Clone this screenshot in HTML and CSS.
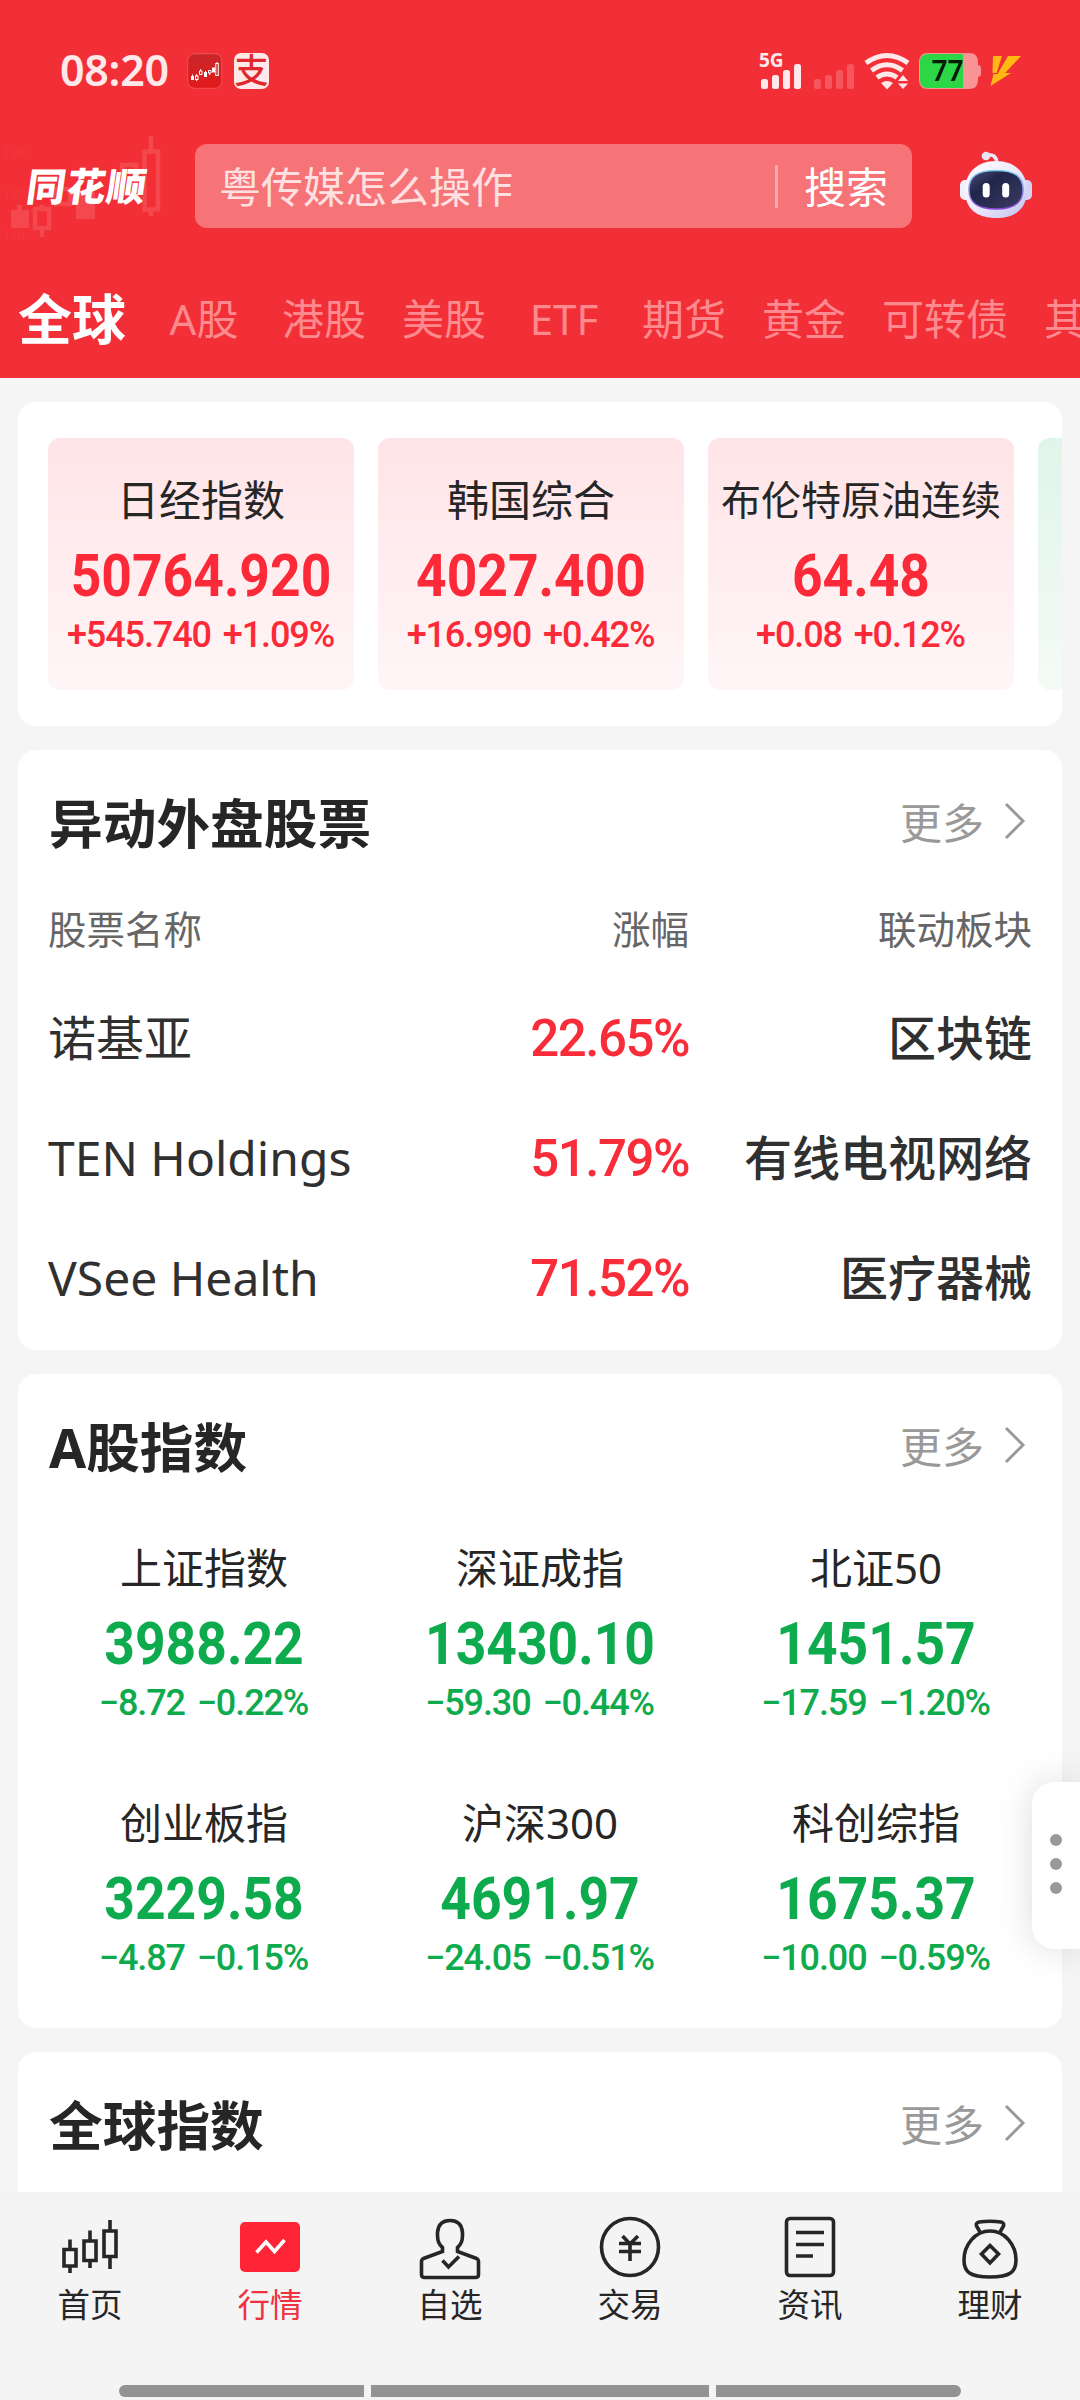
FILE: index.html
```html
<!DOCTYPE html>
<html lang="zh-CN">
<head>
  <meta charset="UTF-8" />
  <meta name="viewport" content="width=device-width, initial-scale=1.0"/>
  <title>同花顺 行情</title>
  <link rel="stylesheet" href="styles.css">
</head>
<body>
  <header class="header">
    <div class="status">
      <span class="time">08:20</span>
      <svg class="app-icon" width="36" height="36" viewBox="0 0 36 36">
        <defs>
          <linearGradient id="appBg" x1="0" y1="0" x2="0" y2="1">
            <stop offset="0" stop-color="#c8282b"/>
            <stop offset="1" stop-color="#e3191b"/>
          </linearGradient>
        </defs>
        <rect x=".7" y=".7" width="34" height="34.6" rx="7" fill="url(#appBg)" stroke="#ee5055"/>
        <g fill="#fff">
          <rect x="4" y="23" width="3" height="4"/>
          <path d="M17 19h3v5h-3zM25 14.500h3v5h-3z"/>
        </g>
        <g fill="none" stroke="#fff" stroke-width="1">
          <rect x="8.500" y="23" width="2.500" height="3.500"/>
          <path d="M9.700 21v2m0 3v2M12.500 18h2.500v3.500h-2.500zM21.500 17.500h2.500v2.500h-2.500zM22.700 20v2"/>
          <rect x="28.800" y="10.500" width="2.500" height="12"/>
          <path d="M5.500 21.500v2M13.700 16v2M18.500 18v2M30 9v2"/>
        </g>
      </svg>
      <span class="pay-icon">支</span>
      <svg class="status-right" width="270" height="44" viewBox="0 0 270 44">
        <text class="net" x="8" y="20">5G</text>
        <g fill="#ffe8ea">
          <rect x="10" y="32" width="7" height="10" rx="2.500"/>
          <rect x="21" y="28" width="7" height="14" rx="2.500"/>
          <rect x="32" y="23" width="7" height="19" rx="2.500"/>
          <rect x="43" y="17" width="7" height="25" rx="2.500"/>
        </g>
        <g fill="#f6565d">
          <rect x="63" y="32" width="7" height="10" rx="2.500"/>
          <rect x="74" y="28" width="7" height="14" rx="2.500"/>
          <rect x="85" y="23" width="7" height="19" rx="2.500"/>
          <rect x="96" y="17" width="7" height="25" rx="2.500"/>
        </g>
        <g fill="none" stroke="#ffe8ea" stroke-width="5">
          <path d="M115 16q21-15 42 0"/>
          <path d="M120.500 23.500q15.500-11.500 31 0"/>
          <path d="M126 30.500q10-7 20 0"/>
        </g>
        <path d="M130 36q6-4 12 0l-6 6.500z" fill="#ffe8ea"/>
        <path d="M152 28l5 6h-10zM152 42l5-5.500h-10z" fill="#ffe8ea"/>
        <path d="M177 6h41q9 0 9 9v3q3 0 3 4v4q0 4-3 4v3q0 9-9 9h-41q-9 0-9-9V15q0-9 9-9z" fill="#fa9396"/>
        <path d="M177 7h35v34h-35q-8 0-8-8V15q0-8 8-8z" fill="#2bd747"/>
        <text class="charge" x="180.500" y="34">77</text>
        <path d="M242 9h9l-5.500 17h-4zM257 9h13l-16 17h6l-20.500 13 3-12h4z" fill="#ffb912"/>
      </svg>
    </div>

    <div class="topbar">
      <svg class="watermark" width="180" height="130" viewBox="0 0 180 130">
        <g fill="#f4474e">
          <path d="M11 83h6v-5h5v5h7v18H11zM76 65h19v27H76z"/>
        </g>
        <g fill="none" stroke="#f4474e" stroke-width="4.500">
          <path d="M35 82h14v19H35zM42 78v4M42 101v9M56 62h14v15H56zM122 38h14v28h-14zM144.500 24.500h13.500v38.500v19.500h-13.500zM151 9v15M151 83v6"/>
        </g>
        <g class="scale">
          <text x="3" y="30">130</text>
          <text x="3" y="71">120</text>
          <text x="3" y="113">110</text>
        </g>
      </svg>
      <div class="logo">同花顺</div>
      <div class="search">
        <span class="keyword">粤传媒怎么操作</span>
        <span class="divider"></span>
        <span class="search-btn">搜索</span>
      </div>
      <svg class="robot" width="76" height="72" viewBox="0 0 76 72">
        <defs>
          <linearGradient id="shell" x1="0" y1="0" x2="1" y2="1">
            <stop offset="0" stop-color="#ffffff"/>
            <stop offset=".5" stop-color="#eeeafb"/>
            <stop offset="1" stop-color="#bfc0ef"/>
          </linearGradient>
          <linearGradient id="rim" x1="0" y1="0" x2="0" y2="1">
            <stop offset="0" stop-color="#7fcdf0"/>
            <stop offset="1" stop-color="#8a45d8"/>
          </linearGradient>
          <linearGradient id="face" x1="0" y1="0" x2="1" y2="1">
            <stop offset="0" stop-color="#4a4f76"/>
            <stop offset=".35" stop-color="#22254a"/>
            <stop offset="1" stop-color="#3a3c62"/>
          </linearGradient>
        </defs>
        <path d="M26 7q10-2 11 8" fill="none" stroke="#eee9f8" stroke-width="3.500"/>
        <circle cx="26" cy="8" r="4.300" fill="#ece3f3"/>
        <rect x="0" y="32" width="12" height="20" rx="5" fill="#f2effc"/>
        <rect x="60" y="32" width="12" height="20" rx="5" fill="#d5d2f4"/>
        <path d="M36 13c20 0 31 13 31 29 0 19-12 28-31 28S5 61 5 42c0-16 11-29 31-29z" fill="url(#shell)"/>
        <path d="M36 22.500c19 0 27 6 27 19s-8 19.500-27 19.500-27-6.500-27-19.500 8-19 27-19z" fill="url(#face)" stroke="url(#rim)" stroke-width="1.500"/>
        <rect x="22.700" y="35" width="7" height="14.500" rx="3.500" fill="#fff"/>
        <rect x="42.200" y="35" width="7" height="14.500" rx="3.500" fill="#fff"/>
      </svg>
    </div>

    <nav class="tabs">
      <span class="tab current">全球</span>
      <span class="tab">A股</span>
      <span class="tab">港股</span>
      <span class="tab">美股</span>
      <span class="tab">ETF</span>
      <span class="tab">期货</span>
      <span class="tab">黄金</span>
      <span class="tab">可转债</span>
      <span class="tab">其他</span>
    </nav>
  </header>

  <main class="content">
    <section class="card slides">
      <div class="slide up">
        <div class="name">日经指数</div>
        <div class="value">50764.920</div>
        <div class="change">+545.740 +1.09%</div>
      </div>
      <div class="slide up">
        <div class="name">韩国综合</div>
        <div class="value">4027.400</div>
        <div class="change">+16.990 +0.42%</div>
      </div>
      <div class="slide up">
        <div class="name long">布伦特原油连续</div>
        <div class="value">64.48</div>
        <div class="change">+0.08 +0.12%</div>
      </div>
      <div class="slide down"></div>
    </section>

    <section class="card movers">
      <div class="card-head">
        <h2>异动外盘股票</h2>
        <a class="more">更多<svg width="22" height="38" viewBox="0 0 22 38"><path d="M2 2l17 17L2 36"/></svg></a>
      </div>
      <div class="row labels">
        <span>股票名称</span><span>涨幅</span><span>联动板块</span>
      </div>
      <div class="row">
        <span>诺基亚</span><span class="pct">22.65%</span><span class="sector">区块链</span>
      </div>
      <div class="row">
        <span>TEN Holdings</span><span class="pct">51.79%</span><span class="sector">有线电视网络</span>
      </div>
      <div class="row">
        <span>VSee Health</span><span class="pct">71.52%</span><span class="sector">医疗器械</span>
      </div>
    </section>

    <section class="card indices">
      <div class="card-head">
        <h2>A股指数</h2>
        <a class="more">更多<svg width="22" height="38" viewBox="0 0 22 38"><path d="M2 2l17 17L2 36"/></svg></a>
      </div>
      <div class="index-grid down-text">
        <div class="index">
          <div class="name">上证指数</div>
          <div class="value">3988.22</div>
          <div class="change">−8.72 −0.22%</div>
        </div>
        <div class="index">
          <div class="name">深证成指</div>
          <div class="value">13430.10</div>
          <div class="change">−59.30 −0.44%</div>
        </div>
        <div class="index">
          <div class="name">北证50</div>
          <div class="value">1451.57</div>
          <div class="change">−17.59 −1.20%</div>
        </div>
        <div class="index">
          <div class="name">创业板指</div>
          <div class="value">3229.58</div>
          <div class="change">−4.87 −0.15%</div>
        </div>
        <div class="index">
          <div class="name">沪深300</div>
          <div class="value">4691.97</div>
          <div class="change">−24.05 −0.51%</div>
        </div>
        <div class="index">
          <div class="name">科创综指</div>
          <div class="value">1675.37</div>
          <div class="change">−10.00 −0.59%</div>
        </div>
      </div>
    </section>

    <section class="card world">
      <div class="card-head">
        <h2>全球指数</h2>
        <a class="more">更多<svg width="22" height="38" viewBox="0 0 22 38"><path d="M2 2l17 17L2 36"/></svg></a>
      </div>
    </section>
  </main>

  <div class="side-handle"><i></i><i></i><i></i></div>

  <footer class="footer">
    <nav class="bottom-nav">
      <a class="nav-item">
        <svg viewBox="0 0 72 72"><path d="M10 37.500h12v16.500H10zM16 27.500v10M16 54v7M30 29h12v19.500H30zM36 18.500V29M36 48.500V56M50 19h12v25.500H50zM56 8v11M56 44.500V57"/></svg>
        <span>首页</span>
      </a>
      <a class="nav-item active">
        <svg viewBox="0 0 72 72"><rect class="fill" x="6" y="10" width="60" height="50" rx="5"/><path class="spark" d="M22.500 40.500l9.500-10.500 8.500 9.500 10-11.500"/></svg>
        <span>行情</span>
      </a>
      <a class="nav-item">
        <svg viewBox="0 0 72 72"><path d="M28.500 39.500v-4q-5-4-5-12v-3q1-12 12.500-12t12.500 12v3q0 8-5 12v4l19 7q2 1 2 3v13q0 3-3 3h-51q-3 0-3-3v-13q0-2 2-3z"/><path d="M28.500 48.500l6 6.500 10.500-10.500"/></svg>
        <span>自选</span>
      </a>
      <a class="nav-item">
        <svg viewBox="0 0 72 72"><circle cx="36" cy="35" r="28.500"/><path d="M28.500 24l7.500 8 8-8M25 31.500h22M25 39.500h22M36 31v18"/></svg>
        <span>交易</span>
      </a>
      <a class="nav-item">
        <svg viewBox="0 0 72 72"><rect x="12.500" y="6.500" width="47" height="57" rx="3.500"/><path d="M22 20.500h28M22 32.500h28M22 44h17"/></svg>
        <span>资讯</span>
      </a>
      <a class="nav-item">
        <svg viewBox="0 0 72 72"><path d="M26 20l-3.500-6q-1-3 2.500-4 11-1.500 22 0 3.500 1 2.500 4L46 20"/><path d="M36 19c15 0 26 14 26 29 0 12-6 17-26 17S10 60 10 48c0-15 11-29 26-29z"/><path d="M36 33.500l8.500 8.500-8.500 9-8.500-9z"/></svg>
        <span>理财</span>
      </a>
    </nav>
    <div class="gesture-bar"><i></i><i></i><i></i></div>
  </footer>
</body>
</html>
```

FILE: styles.css
```css
* {
  box-sizing: border-box;
}
body {
  margin: 0;
  width: 1080px;
  height: 2400px;
  display: flex;
  flex-direction: column;
  overflow: hidden;
  position: relative;
  background: #f5f5f5;
  color: #262626;
  font-family: "Noto Sans", "Noto Sans CJK SC", sans-serif;
}
svg {
  display: block;
  flex: none;
}

/* header */
.header {
  height: 378px;
  flex: none;
  background: #f22f37;
  color: #fff;
}
.status {
  height: 129px;
  padding: 12px 60px 0;
  display: flex;
  align-items: center;
}
.time {
  width: 127px;
  color: #ffe8ea;
  font-size: 43px;
  font-weight: 600;
  line-height: 60px;
  letter-spacing: -.3px;
  margin-top: -1px;
}
.pay-icon {
  width: 35px;
  height: 36px;
  margin-left: 11px;
  border-radius: 7px;
  background: #ffe8ea;
  color: #e0282f;
  font-size: 34px;
  font-weight: 500;
  line-height: 34px;
  text-align: center;
}
.status-right {
  margin-left: auto;
  margin-right: -1px;
  margin-bottom: 4px;
}
.net {
  font: 700 19px "Noto Sans", sans-serif;
  fill: #ffe8ea;
}
.charge {
  font: 600 28px "Noto Sans", sans-serif;
  fill: #0a1a08;
}
.topbar {
  height: 130px;
  display: flex;
  align-items: center;
  padding: 0 44px 16px 27px;
  position: relative;
}
.watermark {
  position: absolute;
  left: 0;
  top: -2px;
}
.scale text {
  font: 13px "Noto Sans", sans-serif;
  fill: #f3383f;
}
.logo {
  position: relative;
  flex: none;
  width: 168px;
  font-size: 39px;
  font-weight: 900;
  line-height: 50px;
  letter-spacing: 1px;
  transform: skewX(-8deg);
}
.search {
  flex: none;
  width: 717px;
  height: 84px;
  padding: 0 24px;
  display: flex;
  align-items: center;
  border-radius: 12px;
  background: #f67377;
  font-size: 42px;
  line-height: 84px;
}
.keyword {
  flex: 1;
  padding-top: 2px;
  color: #fee0e1;
}
.search-btn {
  padding-top: 2px;
}
.divider {
  width: 3px;
  height: 43px;
  margin-right: 26px;
  background: #fba9ac;
}
.robot {
  margin-left: 48px;
  margin-bottom: 4px;
}
.tabs {
  height: 119px;
  display: flex;
  align-items: center;
  gap: 36px;
  padding-left: 18px;
  overflow: hidden;
}
.tab {
  flex: none;
  min-width: 84px;
  font-size: 42px;
  text-align: center;
  line-height: 60px;
  color: #fc8a8e;
}
.tab.current {
  font-size: 54px;
  font-weight: 700;
  color: #fff;
}

/* cards */
.content {
  height: 1814px;
  flex: none;
  padding: 24px 18px 0;
  display: flex;
  flex-direction: column;
  gap: 24px;
  overflow: hidden;
}
.card {
  flex: none;
  border-radius: 18px;
  background: #fff;
  overflow: hidden;
}
.slides {
  height: 324px;
  padding: 36px 0 36px 30px;
  display: flex;
  gap: 24px;
}
.slide {
  flex: none;
  width: 306px;
  height: 252px;
  padding-top: 31px;
  border-radius: 12px;
  text-align: center;
}
.slide.up {
  background: linear-gradient(#ffe4e7, #fff6f7);
}
.slide.down {
  background: linear-gradient(#e0f5e9, #f4fbf7);
}
.name {
  height: 62px;
  font-size: 42px;
  line-height: 62px;
  white-space: nowrap;
}
.name.long {
  font-size: 40px;
}
.value {
  height: 70px;
  margin-top: 10px;
  font-family: Roboto, sans-serif;
  font-size: 59px;
  font-weight: 700;
  line-height: 70px;
  transform: scaleX(.905);
}
.change {
  height: 44px;
  margin-top: 2px;
  padding-right: 1px;
  font-family: Roboto, sans-serif;
  font-size: 36px;
  font-weight: 500;
  line-height: 44px;
  letter-spacing: -1.1px;
  word-spacing: 4px;
  white-space: nowrap;
}
.up .value,
.up .change,
.pct {
  color: #fc2a38;
}
.down-text .value,
.down-text .change {
  color: #0dab4d;
}

.card-head {
  height: 148px;
  padding: 0 36px 0 31px;
  display: flex;
  align-items: center;
  justify-content: space-between;
}
.card-head h2 {
  margin: 0;
  font-size: 53.7px;
  font-weight: 700;
  line-height: 76px;
}
.more {
  display: flex;
  align-items: center;
  gap: 20px;
  margin-top: -2px;
  font-size: 42px;
  line-height: 60px;
  color: #999;
}
.more svg {
  margin-top: -4px;
  fill: none;
  stroke: #999;
  stroke-width: 3;
}

.movers {
  height: 600px;
}
.row {
  height: 120px;
  padding: 0 30px;
  display: grid;
  grid-template-columns: 340px 301px 1fr;
  align-items: center;
  font-size: 48px;
  line-height: 70px;
  white-space: nowrap;
  color: #303030;
}
.row span:nth-child(n+2) {
  text-align: right;
}
.row.labels {
  height: 80px;
  padding-bottom: 18px;
  font-size: 38.5px;
  line-height: 60px;
  color: #666;
}
.row .pct {
  padding-top: 1px;
  font-family: Roboto, sans-serif;
  font-size: 51px;
  font-weight: 500;
  letter-spacing: -1.5px;
  color: #f92c3a;
}
.sector {
  font-weight: 500;
}

.indices {
  height: 654px;
}
.index-grid {
  padding: 15px 18px 0;
  display: grid;
  grid-template-columns: repeat(3, 336px);
  grid-auto-rows: 255px;
  text-align: center;
}
.world {
  height: 160px;
}

/* handle over the right edge */
.side-handle {
  position: absolute;
  right: 0;
  top: 1782px;
  width: 48px;
  height: 167px;
  padding-bottom: 4px;
  display: flex;
  flex-direction: column;
  align-items: center;
  justify-content: center;
  gap: 12px;
  border-radius: 22px 0 0 22px;
  background: #fff;
  box-shadow: 0 0 36px rgba(0, 0, 0, .14);
}
.side-handle i {
  width: 12px;
  height: 12px;
  border-radius: 50%;
  background: #999;
}

/* bottom nav */
.footer {
  height: 208px;
  background: #f4f4f4;
}
.bottom-nav {
  height: 193px;
  padding-top: 20px;
  display: grid;
  grid-template-columns: repeat(6, 1fr);
}
.nav-item {
  display: flex;
  flex-direction: column;
  align-items: center;
  font-size: 32.5px;
  line-height: 41px;
}
.nav-item svg {
  width: 72px;
  height: 72px;
  fill: none;
  stroke: #262626;
  stroke-width: 3.6;
}
.nav-item .fill {
  fill: #ff2436;
  stroke: none;
}
.nav-item .spark {
  stroke: #fff;
}
.active {
  color: #f0303f;
}
.gesture-bar {
  width: 842px;
  height: 12px;
  margin: 0 auto;
  display: grid;
  grid-template-columns: 245px 338px 245px;
  gap: 7px;
  border-radius: 6px;
  overflow: hidden;
}
.gesture-bar i {
  background: #939393;
}
```
